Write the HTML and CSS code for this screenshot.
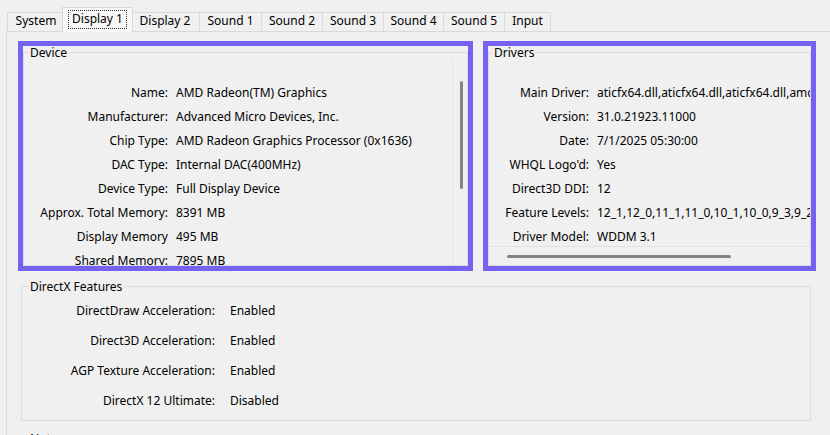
FILE: index.html
```html
<!DOCTYPE html>
<html>
<head>
<meta charset="utf-8">
<link rel="stylesheet" href="styles.css">
</head>
<body>
<div class="tabs">
  <div class="tab w-sys">System</div>
  <div class="tab sel w-d1"><span class="focus">Display 1</span></div>
  <div class="tab w-d2">Display 2</div>
  <div class="tab w-s1">Sound 1</div>
  <div class="tab w-s2">Sound 2</div>
  <div class="tab w-s3">Sound 3</div>
  <div class="tab w-s4">Sound 4</div>
  <div class="tab w-s5">Sound 5</div>
  <div class="tab w-in last">Input</div>
</div>
<div class="panel">
  <div class="toprow">
    <div class="hl dev">
      <fieldset class="grp devgrp">
        <legend>Device</legend>
        <div class="vscroll">
          <div class="rows devrows">
            <div class="lbl">Name:</div><div class="val">AMD Radeon(TM) Graphics</div>
            <div class="lbl">Manufacturer:</div><div class="val">Advanced Micro Devices, Inc.</div>
            <div class="lbl">Chip Type:</div><div class="val">AMD Radeon Graphics Processor (0x1636)</div>
            <div class="lbl">DAC Type:</div><div class="val">Internal DAC(400MHz)</div>
            <div class="lbl">Device Type:</div><div class="val">Full Display Device</div>
            <div class="lbl">Approx. Total Memory:</div><div class="val">8391 MB</div>
            <div class="lbl">Display Memory</div><div class="val">495 MB</div>
            <div class="lbl">Shared Memory:</div><div class="val">7895 MB</div>
          </div>
          <div class="vbar"><div class="vthumb"></div></div>
        </div>
      </fieldset>
    </div>
    <div class="hl drv">
      <fieldset class="grp drvgrp">
        <legend>Drivers</legend>
        <div class="rows drvrows">
          <div class="lbl">Main Driver:</div><div class="val">aticfx64.dll,aticfx64.dll,aticfx64.dll,amdxx64.dll</div>
          <div class="lbl">Version:</div><div class="val">31.0.21923.11000</div>
          <div class="lbl">Date:</div><div class="val">7/1/2025 05:30:00</div>
          <div class="lbl">WHQL Logo'd:</div><div class="val">Yes</div>
          <div class="lbl">Direct3D DDI:</div><div class="val">12</div>
          <div class="lbl">Feature Levels:</div><div class="val">12_1,12_0,11_1,11_0,10_1,10_0,9_3,9_2,9_1</div>
          <div class="lbl">Driver Model:</div><div class="val">WDDM 3.1</div>
        </div>
        <div class="hbar"><div class="hthumb"></div></div>
      </fieldset>
    </div>
  </div>
  <fieldset class="grp dx">
    <legend>DirectX Features</legend>
    <div class="rows dxrows">
      <div class="lbl">DirectDraw Acceleration:</div><div class="val">Enabled</div>
      <div class="lbl">Direct3D Acceleration:</div><div class="val">Enabled</div>
      <div class="lbl">AGP Texture Acceleration:</div><div class="val">Enabled</div>
      <div class="lbl">DirectX 12 Ultimate:</div><div class="val">Disabled</div>
    </div>
  </fieldset>
  <fieldset class="grp notes">
    <legend>Notes</legend>
    <div class="notebody"></div>
  </fieldset>
</div>
</body>
</html>
```

FILE: styles.css
```css
html, body {
  margin: 0;
  padding: 0;
  background: #f0f0f0;
  overflow: hidden;
}
body {
  width: 830px;
  height: 435px;
  font-family: "Noto Sans", "DejaVu Sans", sans-serif;
  font-size: 12px;
  color: #000;
}

/* Tabs */
.tabs {
  display: flex;
  align-items: flex-end;
  height: 31px;
  padding-left: 7px;
  position: relative;
  z-index: 2;
}
.tab {
  box-sizing: border-box;
  height: 19px;
  border-top: 1px solid #d9d9d9;
  border-left: 1px solid #d9d9d9;
  background: #f0f0f0;
  display: flex;
  align-items: flex-start;
  justify-content: center;
  line-height: 16px;
  padding-top: 0;
  white-space: nowrap;
}
.tab.last { border-right: 1px solid #d9d9d9; }
.tab.sel {
  height: 25px;
  margin: 0 -2px -1px -2px;
  border: 1px solid #d9d9d9;
  border-bottom: none;
  background: #f7f7f7;
  position: relative;
  z-index: 3;
  padding-top: 2px;
}
.tab.sel + .tab { border-left: none; }
.focus {
  display: block;
  border: 1px dotted #333;
  padding: 0 3px;
  height: 19px;
  line-height: 16px;
  box-sizing: border-box;
}
.w-sys { width: 57px; }
.w-d1 { width: 71px; }
.w-d2 { width: 68px; }
.w-s1 { width: 62px; }
.w-s2 { width: 61px; }
.w-s3 { width: 61px; }
.w-s4 { width: 60px; }
.w-s5 { width: 61px; }
.w-in { width: 47px; }

/* Panel */
.panel {
  margin-left: 6px;
  border-top: 1px solid #d9d9d9;
  border-left: 1px solid #d9d9d9;
  height: 420px;
  padding: 9px 0 0 11px;
  box-sizing: border-box;
  overflow: hidden;
}
.toprow {
  display: flex;
  gap: 10px;
  height: 230px;
}
.hl {
  border: 5px solid #7562f0;
  box-sizing: border-box;
  height: 230px;
}
.dev { width: 455px; }
.drv { width: 333px; }

/* Group boxes */
.grp {
  margin: 0;
  padding: 0;
  border: 1px solid #dcdcdc;
  min-width: 0;
  box-sizing: border-box;
}
.grp legend {
  padding: 0 2px;
  margin-left: 4px;
  line-height: 13px;
  height: 13px;
}
.devgrp {
  width: 445px;
  height: 220px;
}
.drvgrp {
  width: 323px;
  height: 220px;
}
.drvgrp legend { margin-left: 3px; }

.rows {
  display: grid;
  white-space: nowrap;
  line-height: 24px;
}
.lbl { text-align: right; }

.vscroll {
  display: flex;
  height: 206px;
}
.devrows {
  flex: 1;
  grid-template-columns: 144px auto;
  column-gap: 8px;
  grid-auto-rows: 24px;
  padding-top: 22px;
  overflow: hidden;
  align-content: start;
}
.vbar {
  width: 15px;
  border-left: 1px solid #e3e3e3;
  margin-top: 1px;
  padding-top: 21px;
  padding-left: 7px;
  box-sizing: border-box;
}
.vthumb {
  width: 3px;
  height: 108px;
  background: #858585;
  border-radius: 2px;
}

.drvrows {
  grid-template-columns: 100px auto;
  column-gap: 8px;
  grid-auto-rows: 24px;
  padding-top: 22px;
  height: 188px;
  box-sizing: border-box;
  overflow: hidden;
  align-content: start;
  border-bottom: 1px solid #e3e3e3;
}
.hbar {
  height: 19px;
  padding: 8px 0 0 18px;
  box-sizing: border-box;
}
.hthumb {
  width: 224px;
  height: 3px;
  background: #858585;
  border-radius: 2px;
}

.dx {
  margin: 9px 0 0 3px;
  width: 790px;
  height: 141px;
}
.dx legend { margin-left: 6px; }
.dxrows {
  grid-template-columns: 193px auto;
  column-gap: 15px;
  grid-auto-rows: 30px;
  line-height: 30px;
  padding-top: 3px;
}
.notes {
  margin: 11px 0 0 3px;
  width: 790px;
  height: 60px;
}
.notes legend { margin-left: 6px; }
```
